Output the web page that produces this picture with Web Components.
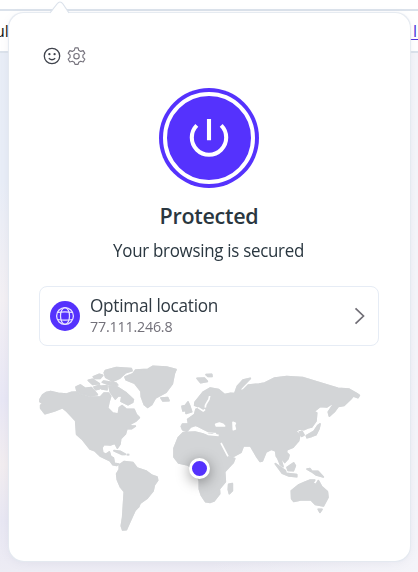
<!DOCTYPE html>
<html lang="en"><head><meta charset="utf-8"><title>VPN</title>
<style>html,body{margin:0;width:418px;height:572px;overflow:hidden;background:#e9edf7;font-family:"Open Sans","Noto Sans",sans-serif}</style></head>
<body><vpn-page></vpn-page>
<script>
const define=(name,html)=>customElements.define(name,class extends HTMLElement{constructor(){super();this.attachShadow({mode:'open'}).innerHTML=html}});

define('page-backdrop',`<style>
:host{display:block;width:418px;height:572px;background:linear-gradient(#fff 9px,#dbe2eb 9px 11px,#fff 11px 51px,#dbe2eb 51px 53px,transparent 53px),linear-gradient(90deg,transparent 50%,#f4f4f9 100%),linear-gradient(#e8edf6 0,#e8edf7 180px,#f3f0f4 300px,#e8e7f5 400px,#f2edf0 465px,#e8e7f3 520px,#edecf4 572px)}
.row{display:flex;justify-content:space-between;box-sizing:border-box;height:53px;padding-top:20px;font-size:16px;line-height:22px}
.l{color:#111;margin-left:-5px}.r{color:#4631d8;width:9px;height:19px;border-bottom:1px solid #4f32dc;line-height:22px;text-indent:4px;overflow:visible}
</style><div class="row"><span class="l">ul</span><span class="r">l</span></div>`);

define('tool-icons',`<style>:host{display:flex;gap:6px;height:20px}svg{display:block}</style>
<svg width="18" height="20" viewBox="0 0 18 20" fill="none" stroke="#40444d" stroke-width="1.3"><circle cx="9" cy="10" r="7.7"/><path d="M5.8 12.2q3.2 3 6.4 0"/><circle cx="6.4" cy="8.2" r="1.15" fill="#40444d" stroke="none"/><circle cx="11.6" cy="8.2" r="1.15" fill="#40444d" stroke="none"/></svg>
<svg width="20" height="20" viewBox="0 0 20 20" fill="none" stroke="#77747e" stroke-width="1.15" stroke-linejoin="round"><path d="M8 1.8h3.1l.6 2.5 2 1.1 2.5-.8 1.6 2.8-1.9 1.8v2.2l1.9 1.8-1.6 2.8-2.5-.8-2 1.1-.6 2.1H8l-.7-2.1-2-1.1-2.5.8-1.6-2.8 1.900-1.800V9.200l-1.900-1.800 1.600-2.800 2.500.8 2-1.100z"/><circle cx="9.500" cy="10.200" r="2.700"/></svg>`);

define('power-button',`<style>:host{display:block;width:100px;height:100px}svg{display:block}</style>
<svg width="100" height="100"><circle cx="50" cy="50" r="50" fill="#5532fd"/><circle cx="50" cy="50" r="44" fill="none" stroke="#fff" stroke-width="4"/><path d="M37.800 37.400A17.200 17.200 0 1 0 62.200 37.400M50 31V52.200" fill="none" stroke="#fff" stroke-width="4.100"/></svg>`);

define('vpn-status',`<style>
:host{display:flex;flex-direction:column;align-items:center;color:#2a3740}
h1{font-size:21.500px;line-height:30px;margin:0;font-weight:600;letter-spacing:-.3px}
p{font-size:18px;line-height:24px;margin:7px 0 0;letter-spacing:-.3px;white-space:nowrap;transform:scaleX(.94)}
</style><h1><slot name="title"></slot></h1><p><slot></slot></p>`);

define('location-row',`<style>
:host{display:flex;align-items:center;box-sizing:border-box;width:340px;height:60px;border:1px solid #e6ecf5;border-radius:8px;padding:0 9px 0 10px;background:#fff}
svg{display:block}.text{flex:1;margin-left:10px;white-space:nowrap;padding-bottom:3px}
.name,.ip{transform-origin:0 50%}
.name{font-size:18.500px;line-height:24px;color:#303a43;letter-spacing:-.3px;transform:scaleX(.93)}.ip{font-size:14.500px;line-height:20px;color:#73717a;letter-spacing:-.2px;transform:scaleX(.985)}
</style><svg width="30" height="30"><circle cx="15" cy="15" r="15" fill="#5532fd"/><g fill="none" stroke="#e9e5ff" stroke-width="1.250"><circle cx="15" cy="15" r="8.400"/><ellipse cx="15" cy="15" rx="4.500" ry="8.400"/><path d="M7.400 11.500Q15 10.300 22.600 11.500M7.400 18.500Q15 19.700 22.600 18.500"/></g></svg>
<div class="text"><div class="name"><slot name="name"></slot></div><div class="ip"><slot name="ip"></slot></div></div>
<svg width="18" height="20" viewBox="0 0 18 20"><path d="M4.500 2.300 12.500 10 4.500 17.700" fill="none" stroke="#706e76" stroke-width="1.700"/></svg>`);

define('world-map',`<style>:host{display:block;width:340px;height:180px;position:relative}svg{display:block}
.land{filter:drop-shadow(0 0 1px #d3d5d7a0)}
.pin{position:absolute;left:159px;top:102.500px;width:15px;height:15px;border:3px solid #fff;border-radius:50%;background:#5532fd;box-shadow:0 3px 14px #0006}
</style><svg width="340" height="180" viewBox="0 0 1020 540"><g class="land" fill="#d3d5d7" stroke="#d3d5d7" stroke-width="5" stroke-linejoin="round">
<path d="M30 133 38 120 48 113 62 110 85 115 110 117 125 112 138 111 150 119 175 126 211 126 222 114 235 114 242 124 237 140 233 159 248 174 265 177 268 158 276 152 288 162 312 163 319 179 328 188 318 198 301 207 303 213 316 213 305 221 291 220 286 237 272 251 270 267 262 279 255 265 241 270 222 268 216 278 218 293 227 298 238 291 242 304 250 309 253 325 266 327 260 331 249 329 240 317 212 304 194 287 180 282 158 254 140 238 137 197 111 169 97 158 73 168 45 176 32 160 32 151 40 147 30 140Z"/>
<path d="M252 287 270 289 286 298 275 298ZM290 299 298 299"/>
<path d="M268 330 282 320 309 323 321 339 348 348 366 361 381 366 383 376 373 390 369 408 352 429 330 445 326 455 315 466 300 499 289 524 278 525 274 513 278 487 283 410 272 397 262 374 260 357 268 343Z"/>
<path d="M226 47 259 38 304 41 306 47 287 53 270 69 249 79 227 67 223 53ZM190 65 208 58 218 61 210 70 193 70ZM175 76 187 73 208 86 188 88ZM221 78 258 84 263 90 235 88 217 82ZM211 94 231 92 231 104 215 102ZM237 93 260 95 289 114 310 134 308 142 294 149 273 139 276 123 265 122 256 132 241 111ZM192 96 209 91 209 101 197 104ZM138 96 151 90 166 100 184 98 202 119 180 122 154 116 141 108Z"/>
<path d="M285 66 309 56 317 45 354 43 369 34 410 36 438 44 433 55 427 86 408 112 376 129 365 149 353 157 343 149 334 125 333 109 314 85 288 74ZM393 129 413 128 417 137 399 138ZM501 70 523 69 532 79 512 83ZM528 59 545 58 546 64 534 64Z"/>
<path d="M456 154 465 152 474 141 479 152 485 170 468 175 468 166 459 168Z"/>
<path d="M495 142 519 112 541 99 566 104 584 119 602 115 614 116 622 94 639 75 661 70 636 96 625 108 640 105 655 90 687 87 704 84 734 69 770 65 818 68 872 84 924 100 956 102 981 116 988 121 984 128 970 123 961 133 942 151 925 154 914 169 898 183 895 171 909 150 906 146 890 156 871 154 852 169 860 174 858 198 845 216 833 219 821 224 807 222 797 229 809 241 806 257 789 277 771 284 769 292 777 300 774 311 764 322 755 309 751 304 756 325 759 335 751 328 744 311 739 303 737 288 724 283 708 291 697 318 690 319 681 306 661 272 637 273 627 267 611 253 603 248 617 262 630 274 640 273 633 292 608 305 594 300 572 266 571 247 563 240 560 231 534 229 522 223 509 216 497 211 482 216 470 229 458 224 454 214 458 207 476 207 473 193 494 178 498 163 513 158 494 151Z"/>
<path d="M460 233 495 231 526 239 545 237 569 246 574 264 592 305 614 311 610 322 584 350 586 380 568 402 569 416 552 438 541 442 527 440 514 421 508 402 508 378 500 355 490 339 473 330 446 324 432 306 432 280 445 248ZM596 388 607 386 607 407 598 416 595 404Z"/>
<path d="M864 211 870 207 867 221 858 239 845 244 831 248 829 242 852 229ZM808 231 816 229 822 240 815 244ZM736 326 766 347 768 355 800 359 800 365 777 363 757 355ZM771 337 791 324 796 332 790 347 774 346ZM831 342 840 341 845 348 864 349 880 366 859 360 845 350Z"/>
<path d="M784 408 807 389 824 382 841 375 854 375 848 384 858 389 865 377 875 395 892 410 894 427 880 453 856 448 843 435 812 435 791 439 785 431ZM865 463 876 463 870 472Z"/>
</g><g fill="#fff" stroke="#fff" stroke-width="5" stroke-linejoin="round"><path d="M557 208 568 204 579 208 584 213 559 213ZM609 202 616 205 613 211 616 222 610 224Z"/><path d="M539 123C538 143 523 143 526 158M525 163 520 168 504 158M520 231 534 238 566 241M573 264 594 304" fill="none"/></g></svg><div class="pin"></div>`);

define('vpn-panel',`<style>
:host{position:absolute;left:9px;top:13px;width:401px;height:548px;box-sizing:border-box;background:#fff;border-radius:15px;box-shadow:0 0 1px .5px #e4e9f0,0 2px 10px #7b83a018;padding:33px 30px 0;display:flex;flex-direction:column}
.tip{position:absolute;left:41px;top:-13px}power-button{margin:22px 0 0 120px}tool-icons{margin-left:4px}vpn-status{width:340px;margin-top:13px}location-row{margin-top:24px}world-map{margin:9px 0 0 -9px}
</style><svg class="tip" width="20" height="17"><path d="M0 13 7 4Q10 0 13 4L19 13V17H0Z" fill="#fff"/><path d="M0 13 7 4Q10 0 13 4L19 13" fill="none" stroke="#dbe2eb" stroke-width="1.200"/></svg>
<tool-icons></tool-icons><power-button></power-button><vpn-status><span slot="title">Protected</span>Your browsing is secured</vpn-status><location-row><span slot="name">Optimal location</span><span slot="ip">77.111.246.8</span></location-row><world-map></world-map>`);

define('vpn-page',`<style>:host{display:block;position:relative;width:418px;height:572px}</style><page-backdrop></page-backdrop><vpn-panel></vpn-panel>`);
</script></body></html>
